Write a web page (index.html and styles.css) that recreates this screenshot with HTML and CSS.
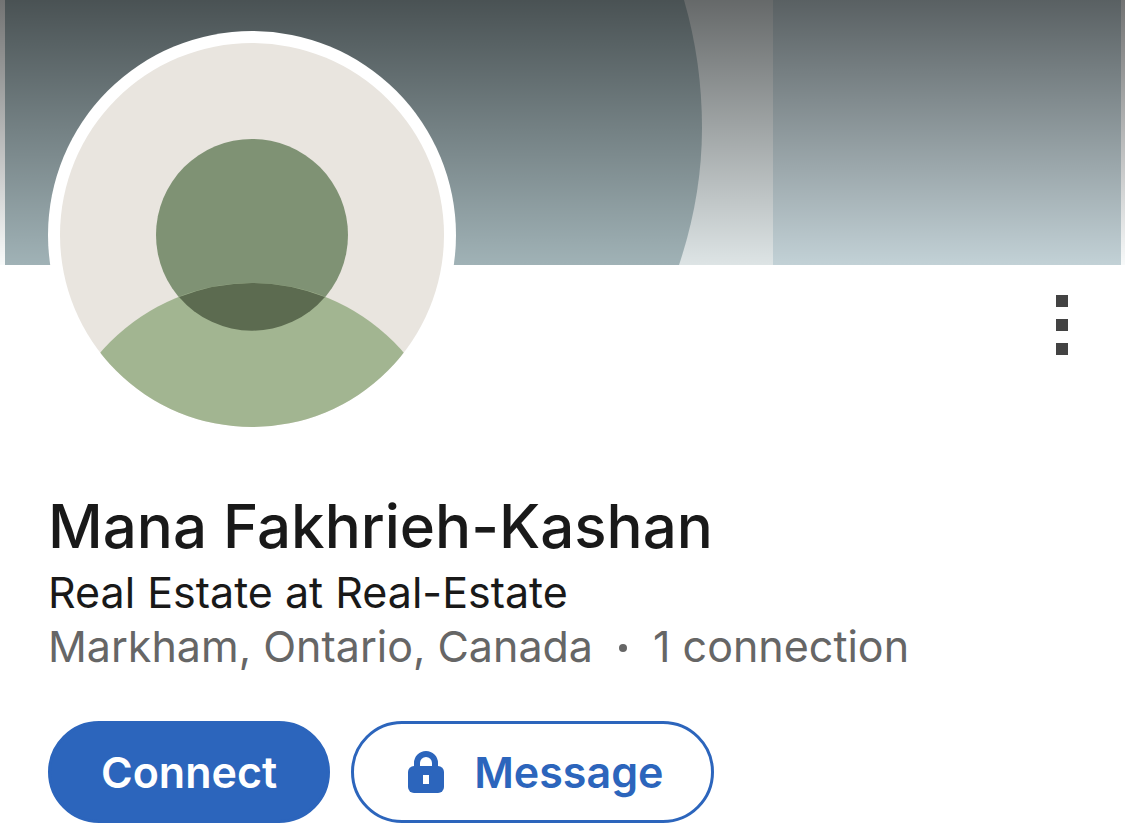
FILE: index.html
```html
<!DOCTYPE html>
<html lang="en">
<head>
    <meta charset="UTF-8">
    <meta name="viewport" content="width=device-width, initial-scale=1.0">
    <title>Mana Fakhrieh-Kashan</title>
    <link rel="stylesheet" href="styles.css">
</head>
<body>
    <main class="profile">
        <!-- Cover -->
        <div class="cover">
            <svg class="cover-art" viewBox="0 0 1125 265" preserveAspectRatio="none" aria-hidden="true">
                <defs>
                    <linearGradient id="shade" x1="0" y1="0" x2="0" y2="1">
                        <stop offset="0" stop-color="#000" stop-opacity="0.54"/>
                        <stop offset="1" stop-color="#000" stop-opacity="0"/>
                    </linearGradient>
                </defs>
                <rect width="1125" height="265" fill="#f8fafa"/>
                <rect x="5" width="768" height="265" fill="#dde4e5"/>
                <path d="M5 0H684Q702 62 702 128Q702 196 679 265H5Z" fill="#a0b2b6"/>
                <rect x="773" width="348" height="265" fill="#c2d1d6"/>
                <rect width="1125" height="265" fill="url(#shade)"/>
            </svg>
        </div>

        <!-- Photo and menu -->
        <div class="top-row">
            <svg class="avatar" viewBox="0 0 408 408" role="img" aria-label="Profile photo">
                <defs>
                    <clipPath id="photo"><circle cx="204" cy="204" r="192"/></clipPath>
                </defs>
                <circle cx="204" cy="204" r="204" fill="#fff"/>
                <g clip-path="url(#photo)">
                    <rect width="408" height="408" fill="#e9e5df"/>
                    <circle cx="204" cy="204" r="96" fill="#7f9274"/>
                    <circle cx="204" cy="452" r="200" fill="#a2b591"/>
                    <path d="M131 266Q204 238 277 266A96 96 0 0 1 131 266Z" fill="#5c6b50"/>
                </g>
            </svg>
            <button class="more" type="button" aria-label="More">
                <svg width="12" height="60" viewBox="0 0 12 60">
                    <path d="M0 0h12v12H0zM0 24h12v12H0zM0 48h12v12H0z" fill="#434343"/>
                </svg>
            </button>
        </div>

        <!-- Name and details -->
        <div class="info">
            <h1 class="name">Mana Fakhrieh-Kashan</h1>
            <p class="headline">Real Estate at Real-Estate</p>
            <p class="meta">
                <span>Markham, Ontario, Canada</span>
                <span class="dot"></span>
                <span>1 connection</span>
            </p>
        </div>

        <div class="actions">
            <button class="btn btn-primary" type="button">Connect</button>
            <button class="btn btn-outline" type="button">
                <svg class="lock" width="36" height="42" viewBox="0 0 36 42" aria-hidden="true">
                    <path d="M9 18V12a9 9 0 0 1 18 0v6" fill="none" stroke="currentColor" stroke-width="6"/>
                    <path d="M6 15h24a6 6 0 0 1 6 6v15a6 6 0 0 1-6 6H6a6 6 0 0 1-6-6V21a6 6 0 0 1 6-6z" fill="currentColor"/>
                    <path d="M15 24h6v9h-6z" fill="#fff"/>
                </svg>
                Message
            </button>
        </div>
    </main>
</body>
</html>
```
FILE: styles.css
```css
body {
    margin: 0;
    font-family: Inter, "Liberation Sans", sans-serif;
    background-color: #ffffff;
    color: #191919;
}

/* Cover */
.cover {
    height: 265px;
}

.cover-art {
    display: block;
    width: 100%;
    height: 100%;
}

/* Photo overlaps the cover */
.top-row {
    display: flex;
    justify-content: space-between;
    align-items: flex-start;
    padding: 0 45px 0 48px;
}

.avatar {
    position: relative;
    width: 408px;
    height: 408px;
    margin-top: -234px;
}

.more {
    padding: 12px;
    margin-top: 18px;
    border: none;
    background: none;
    cursor: pointer;
}

.more svg {
    display: block;
}

/* Name and details */
.info {
    padding: 48px 48px 0;
}

.name {
    margin: 0;
    font-size: 60px;
    line-height: 78px;
    font-weight: 500;
}

.headline,
.meta {
    margin: 0;
    font-size: 43px;
    line-height: 54px;
    font-weight: 400;
}

.meta {
    display: flex;
    align-items: center;
    color: #666666;
}

.dot {
    width: 8px;
    height: 8px;
    margin: 4px 26px 0;
    border-radius: 50%;
    background-color: #666666;
}

/* Buttons */
.actions {
    display: flex;
    gap: 21px;
    padding: 48px 48px 9px;
}

.btn {
    display: flex;
    align-items: center;
    gap: 30px;
    height: 102px;
    padding: 0 50px;
    border: 3px solid #2c65bc;
    border-radius: 51px;
    font-family: inherit;
    font-size: 43px;
    font-weight: 600;
    cursor: pointer;
}

.btn-primary {
    background-color: #2c65bc;
    color: #ffffff;
}

.btn-outline {
    padding: 0 48px 0 54px;
    background-color: #ffffff;
    color: #2c65bc;
}
```
